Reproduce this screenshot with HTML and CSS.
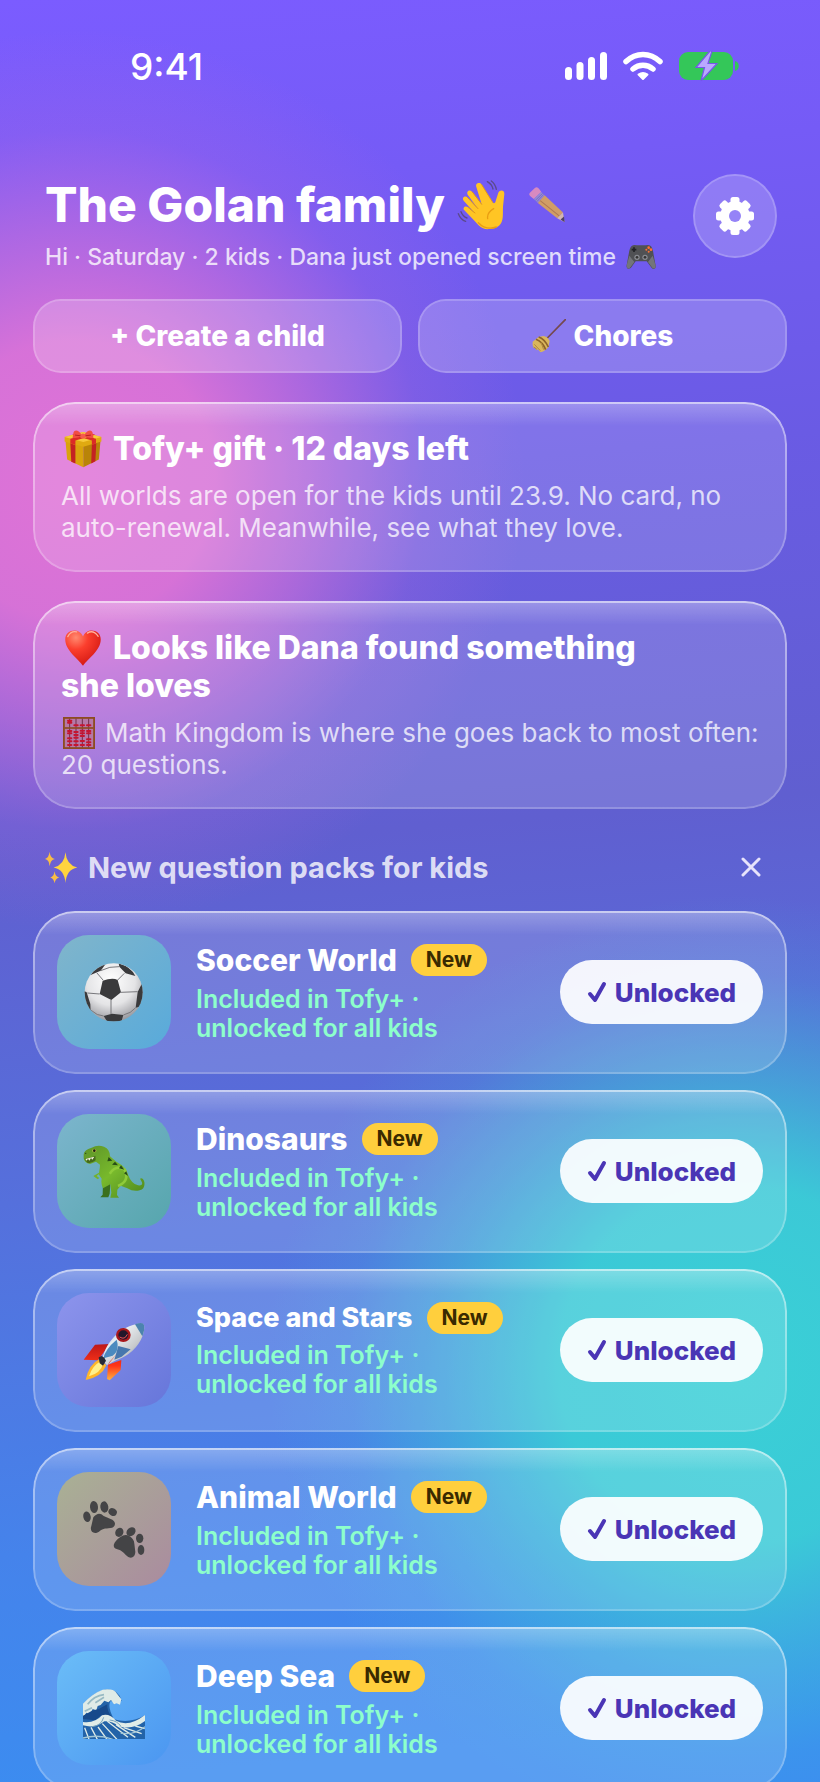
FILE: index.html
```
<!DOCTYPE html>
<html lang="en">
<head>
    <meta charset="UTF-8">
    <meta name="viewport" content="width=device-width, initial-scale=1.0">
    <title>Tofy - Family</title>
    <link rel="stylesheet" href="styles.css">
</head>
<body>
<div class="app">
    <div class="status-bar">
        <span class="clock">9:41</span>
        <div class="status-icons">
            <svg width="42" height="28" viewBox="0 0 42 28" fill="#fff">
                <rect x="0" y="15" width="7" height="13" rx="3.5"/>
                <rect x="11.500" y="10" width="7" height="18" rx="3.500"/>
                <rect x="23" y="5" width="7" height="23" rx="3.500"/>
                <rect x="35" y="0" width="7" height="28" rx="3.500"/>
            </svg>
            <svg width="40" height="30" viewBox="0 0 40 30" fill="none" stroke="#fff" stroke-width="5.500" stroke-linecap="round">
                <path d="M3 10.500C13 1 27 1 37 10.500"/>
                <path d="M10 18C16 13 24 13 30 18"/>
                <path d="M20 28l-4.500-4.500q4.500-3 9 0z" fill="#fff" stroke-width="2" stroke-linejoin="round"/>
            </svg>
            <svg width="60" height="30" viewBox="0 0 60 30">
                <rect x="0" y="1" width="54" height="28" rx="9" fill="#34c759"/>
                <path d="M56 10c5 1 5 9 0 10z" fill="#34c759"/>
                <path d="M31 0L17 16.500h8.500L22 30 38 12.500h-9L33 0z" fill="#b9a8ff" stroke="#7558e8" stroke-width="1.200"/>
            </svg>
        </div>
    </div>

    <header class="header">
        <div class="header-text">
            <h1>The Golan family
                <svg class="emoji-hand" viewBox="0 0 150 150">
                    <path d="M91 5q14 8 17 22M103 3q12 9 15 25M4 101q7 18 22 23M12 95q6 15 18 19" fill="none" stroke="#5b4a8c" stroke-width="4" stroke-linecap="round"/>
                    <path d="M97 147C78 150 65 137 53 123L22 91c-7-9 4-16 11-9l20 17L20 62c-7-9 5-17 12-9l31 33L32 44c-5-10 6-17 13-9l29 38L58 21C54 10 68 5 74 14l33 53c4 5 8 2 9-4l7-22c3-13 20-12 19 1l-4 38c-1 22 3 44-12 57-9 7-18 9-29 10z" fill="#ffc524"/>
                    <path d="M54 99L33 82M63 86L32 53M74 73L46 36M107 67L74 14" stroke="#e59a13" stroke-width="3" fill="none" stroke-linecap="round"/>
                    <path d="M92 116q-3-18 18-30M64 128q23 24 54 13" fill="none" stroke="#e99e12" stroke-width="4" stroke-linecap="round"/>
                </svg>
                <svg class="emoji-pencil" viewBox="0 0 106 106">
                    <path d="M2 18L18 2q7-3 12 4l6 9-22 20-9-7q-6-5-3-10z" fill="#e993b8"/>
                    <path d="M14 35L36 15l10 9-20 23z" fill="#9b92cf"/>
                    <path d="M19 39l21-20M23 43l20-21" stroke="#6d65b4" stroke-width="2"/>
                    <path d="M26 47L46 24l54 51-17 17z" fill="#e2a94e"/>
                    <path d="M33 40l56 45" stroke="#ba7e37" stroke-width="3"/>
                    <path d="M83 92l17-17 5 29z" fill="#e5c7a6"/>
                    <path d="M93 96l10-9 2 17z" fill="#493c4c"/>
                </svg>
            </h1>
            <p>Hi · Saturday · 2 kids · Dana just opened screen time
                <svg class="emoji-pad" viewBox="0 0 90 78">
                    <path d="M18 5Q24 1 32 4h27q8-3 14 1 7 4 10 28l6 32c1 11-9 13-14 4L62 52H29L16 70c-6 8-16 4-14-6L8 31Q11 8 18 5z" fill="#505154"/>
                    <path d="M10 35L2 64q0 12 9 9l14-19zM80 35l9 30q0 11-9 8L66 54z" fill="#73757a"/>
                    <path d="M24 10v14M17 17h14" stroke="#202124" stroke-width="5"/>
                    <circle cx="33" cy="40" r="8" fill="#898b91"/><circle cx="33" cy="40" r="4" fill="#333"/>
                    <circle cx="57" cy="40" r="8" fill="#898b91"/><circle cx="57" cy="40" r="4" fill="#333"/>
                    <g fill="#ff7031"><circle cx="68" cy="11" r="4"/><circle cx="61" cy="17" r="3"/><circle cx="75" cy="17" r="4"/><circle cx="68" cy="23" r="3"/></g>
                </svg>
            </p>
        </div>
        <button class="settings" type="button" aria-label="Settings">
            <svg width="38" height="38" viewBox="-19 -19 38 38">
                <g fill="#fff">
                    <circle r="14.800"/>
                    <rect x="-4.500" y="-19" width="9" height="38" rx="2.500"/>
                    <rect x="-4.500" y="-19" width="9" height="38" rx="2.500" transform="rotate(45)"/>
                    <rect x="-4.500" y="-19" width="9" height="38" rx="2.500" transform="rotate(90)"/>
                    <rect x="-4.500" y="-19" width="9" height="38" rx="2.500" transform="rotate(135)"/>
                </g>
                <circle r="6" fill="#9583f7"/>
            </svg>
        </button>
    </header>

    <div class="actions">
        <button class="action" type="button">+ Create a child</button>
        <button class="action" type="button">
            <svg width="34" height="34" viewBox="0 0 102 102">
                <path d="M100 2L43 60" stroke="#75494d" stroke-width="5" stroke-linecap="round"/>
                <path d="M34 51q13 1 19 15l-4 18q-8 12-23 16-7-6-8-9l-5 3-2-8-6 1Q0 80 2 68L20 54z" fill="#d9b65c"/>
                <path d="M20 54q17 5 29 30M12 61q20 8 29 31" stroke="#8d6329" stroke-width="5" fill="none"/>
                <path d="M7 76l18 19M5 84l10 7M27 70l8 22" stroke="#b18b3d" stroke-width="3"/>
            </svg>
            Chores
        </button>
    </div>

    <section class="card info">
        <h2>
            <svg class="emoji" viewBox="0 0 120 120">
                <path d="M4 25L61 42v76L10 93z" fill="#d9a30c"/>
                <path d="M116 25L61 42v76l49-25z" fill="#b98408"/>
                <path d="M2 22L60 6l58 16v14L61 53 2 36z" fill="#e0aa11"/>
                <path d="M2 22L60 6l58 16-57 16z" fill="#f7ca3b"/>
                <path d="M20 42l16 6v58l-13-6zM88 47l14-5-3 57-13 7z" fill="#c42222"/>
                <path d="M20 28l62-18 17 5-63 18v14l-16-5zM101 28L39 10l-13 5 62 18v14l13-5z" fill="#dc2b27"/>
                <path d="M58 19C47 0 34-3 30 8l-3 17q15 2 31-6zM62 19C73 0 86-3 90 8l3 17q-15 2-31-6z" fill="#f14d43"/>
                <path d="M57 19l-22-3M63 19l22-3" stroke="#b42020" stroke-width="3"/>
                <circle cx="60" cy="19" r="8" fill="#f65a4e"/>
            </svg>Tofy+ gift · 12 days left</h2>
        <p>All worlds are open for the kids until 23.9. No card, no auto-renewal. Meanwhile, see what they love.</p>
    </section>

    <section class="card info">
        <h2>
            <svg class="emoji" viewBox="0 0 120 120">
                <defs>
                    <radialGradient id="heart" cx=".3" cy=".2" r=".85">
                        <stop offset="0" stop-color="#ff8a70"/>
                        <stop offset=".4" stop-color="#fb3e2d"/>
                        <stop offset="1" stop-color="#d31712"/>
                    </radialGradient>
                </defs>
                <path d="M60 116C45 94 4 68 4 33 4 1 48-6 60 24 72-6 116 1 116 33c0 35-41 61-56 83z" fill="url(#heart)"/>
                <path d="M12 24Q22 5 40 9M74 13q18-12 34 10" fill="none" stroke="#ffb09b" stroke-width="4" stroke-linecap="round"/>
            </svg>Looks like Dana found something<br>she loves</h2>
        <p>
            <svg class="emoji-abacus" viewBox="0 0 96 96">
                <rect x="2" y="2" width="92" height="92" fill="#b678a7" stroke="#8d4c20" stroke-width="7"/>
                <path d="M20 5v86M39 5v86M58 5v86M77 5v86" stroke="#71304b" stroke-width="3"/>
                <path d="M4 33h88" stroke="#8d4c20" stroke-width="5"/>
                <g stroke="#c51530" stroke-width="6" stroke-linecap="round">
                    <path d="M15 11h10M15 17h10M34 25h10M53 25h10M72 25h10"/>
                    <path d="M15 42h10M15 49h10M15 64h10M15 73h10M15 84h10"/>
                    <path d="M34 45h10M34 54h10M34 62h10M34 73h10M34 84h10"/>
                    <path d="M53 41h10M53 49h10M53 57h10M53 72h10M53 84h10"/>
                    <path d="M72 42h10M72 49h10M72 67h10M72 76h10M72 84h10"/>
                </g>
            </svg>Math Kingdom is where she goes back to most often: 20 questions.</p>
    </section>

    <div class="section-head">
        <h3>
            <svg class="emoji-sparkles" viewBox="0 0 100 100">
                <path d="M62 4q3 39 36 46-33 6-36 47-3-41-36-47 33-7 36-46z" fill="#ffd43e"/>
                <path d="M14 2q2 19 16 22-14 3-16 22Q13 27 0 24 12 20 14 2zM29 61q2 16 14 19-12 3-14 18-2-15-13-18 11-3 13-19z" fill="#f9bd45"/>
            </svg>New question packs for kids</h3>
        <button class="close" type="button" aria-label="Close">
            <svg width="20" height="20" viewBox="0 0 20 20" stroke="#e7e3fb" stroke-width="3" stroke-linecap="round">
                <path d="M2 2l16 16M18 2L2 18"/>
            </svg>
        </button>
    </div>

    <div class="packs">
        <article class="card pack">
            <div class="tile soccer">
                <svg viewBox="0 0 186 186">
                    <defs>
                        <radialGradient id="ball" cx=".45" cy=".3" r=".7">
                            <stop offset="0" stop-color="#fff"/>
                            <stop offset=".6" stop-color="#e4e4e6"/>
                            <stop offset="1" stop-color="#9b9ba0"/>
                        </radialGradient>
                        <clipPath id="ball-clip"><circle cx="92" cy="94" r="87"/></clipPath>
                    </defs>
                    <circle cx="92" cy="94" r="87" fill="url(#ball)"/>
                    <g clip-path="url(#ball-clip)">
                        <path d="M59 59q30-10 45-2l10 37-29 23-35-18zM107 7q38 12 50 38l-29-8-19-20zM21 43Q37 18 68 9L53 29zM0 89l11 5 11 35 1 25-16-20zM176 69l10 24-11 43-17 4 6-47zM62 165l25-7 34 4-6 20H73z" fill="#3a3a3c"/>
                        <path d="M60 57L41 35M104 57l20-20M113 94l51-2M84 117v42M50 99l-37-3M53 29Q80 15 109 17M23 147q20 18 39 18M121 162q23-5 37-22" fill="none" stroke="#77777b" stroke-width="3"/>
                    </g>
                </svg>
            </div>
            <div class="pack-text">
                <h4>Soccer World <span class="badge">New</span></h4>
                <p>Included in Tofy+ ·<br>unlocked for all kids</p>
            </div>
            <button class="unlocked" type="button">
                <svg viewBox="0 0 20 24"><path d="M3 14l5 6L17 4"/></svg>Unlocked
            </button>
        </article>

        <article class="card pack">
            <div class="tile dino">
                <svg viewBox="0 0 186 186">
                    <defs>
                        <linearGradient id="rex" x1="0" y1="0" x2="1" y2="1">
                            <stop offset="0" stop-color="#5d9428"/>
                            <stop offset=".5" stop-color="#78b92c"/>
                            <stop offset="1" stop-color="#4d871c"/>
                        </linearGradient>
                    </defs>
                    <path d="M60 125l-1 39-7 8h24l4-11 2-28z" fill="#3b701c"/>
                    <path d="M2 43Q3 29 26 23 43 14 63 20q18 7 18 29l19 16q30 16 34 37 12 31 31 34 17 2 11-11-3-6-5-9 9-4 13 10 3 20-14 25-19 5-37-6l-20-8-10 12-1 16 6 8H82l3-15-3-25-22 12q-7-14-4-29l-9-13-6 5 8 6-5 4-13-10 17-10Q51 82 51 74l-12-9-18 7Q4 69 2 55z" fill="url(#rex)"/>
                    <path d="M4 56q17 0 33-9l1 14q-15 11-25 7z" fill="#456a1b"/>
                    <path d="M7 57l4 5 4-6 4 6 5-8 4 5 6-9" fill="#f4f3dc"/>
                    <path d="M80 101q20-29 45-12 16 35-20 49" fill="none" stroke="#8fcb39" stroke-width="8"/>
                    <path d="M77 51l11 11-15 2zM96 65l9 11-18-2zM114 76l10 13-16-4zM130 94l5 14-12-8z" fill="#284d17"/>
                    <ellipse cx="34" cy="32" rx="6" ry="5" fill="#dbc451"/><circle cx="34" cy="32" r="4" fill="#172111"/>
                    <circle cx="8" cy="40" r="2" fill="#26401a"/>
                </svg>
            </div>
            <div class="pack-text">
                <h4>Dinosaurs <span class="badge">New</span></h4>
                <p>Included in Tofy+ ·<br>unlocked for all kids</p>
            </div>
            <button class="unlocked" type="button">
                <svg viewBox="0 0 20 24"><path d="M3 14l5 6L17 4"/></svg>Unlocked
            </button>
        </article>

        <article class="card pack">
            <div class="tile space">
                <svg viewBox="0 0 186 186">
                    <defs>
                        <linearGradient id="hull" x1="0" y1="0" x2="1" y2="1">
                            <stop offset="0" stop-color="#4784b8"/>
                            <stop offset=".35" stop-color="#e8edf0"/>
                            <stop offset=".65" stop-color="#c8cacc"/>
                            <stop offset="1" stop-color="#477ba5"/>
                        </linearGradient>
                        <linearGradient id="fin" x1="0" y1="0" x2="0" y2="1">
                            <stop offset="0" stop-color="#bd1717"/>
                            <stop offset=".6" stop-color="#ff3518"/>
                            <stop offset="1" stop-color="#ffb23e"/>
                        </linearGradient>
                    </defs>
                    <path d="M80 75l-44 2L2 122l43 2zM75 137l40-14-2 30-33 31-8-4z" fill="url(#fin)"/>
                    <path d="M49 121Q18 135 8 183q47-8 62-44z" fill="#ffb629"/>
                    <path d="M53 127q-26 14-35 45 34-9 42-36z" fill="#fff08b"/>
                    <path d="M57 124C66 80 99 29 161 15q17-5 22 3 3 11-4 32-20 52-80 74l-27 14z" fill="url(#hull)"/>
                    <path d="M156 16q24-9 27 2 3 12-5 34z" fill="#4b83ae"/>
                    <path d="M101 62Q66 91 61 118l23-6q28-13 17-50z" fill="#4b8abf"/>
                    <path d="M106 81l37 10-27 22-22 9z" fill="#4777ad"/>
                    <path d="M47 115l9-4 8 5 5 9-9 15-10-7z" fill="#292b36"/>
                    <path d="M74 138l27-33-21 23z" fill="#dd2418"/>
                    <ellipse cx="121" cy="48" rx="22" ry="21" fill="#a8171b"/>
                    <ellipse cx="121" cy="48" rx="15" ry="14" fill="#21172a"/>
                    <path d="M110 54q15 10 23-8" fill="none" stroke="#f05154" stroke-width="3"/>
                </svg>
            </div>
            <div class="pack-text">
                <h4 class="small">Space and Stars <span class="badge">New</span></h4>
                <p>Included in Tofy+ ·<br>unlocked for all kids</p>
            </div>
            <button class="unlocked" type="button">
                <svg viewBox="0 0 20 24"><path d="M3 14l5 6L17 4"/></svg>Unlocked
            </button>
        </article>

        <article class="card pack">
            <div class="tile animal">
                <svg viewBox="0 0 186 186" fill="#444446">
                    <ellipse cx="12" cy="56" rx="11" ry="16" transform="rotate(-12 12 56)"/>
                    <ellipse cx="33" cy="27" rx="12" ry="18" transform="rotate(-5 33 27)"/>
                    <ellipse cx="64" cy="27" rx="12" ry="17" transform="rotate(-8 64 27)"/>
                    <ellipse cx="89" cy="42" rx="13" ry="11" transform="rotate(30 89 42)"/>
                    <path d="M31 58q16-20 31-4l26 11c14 9 8 25-6 25-16 2-22 1-34 11-16 10-29-1-23-17z"/>
                    <ellipse cx="109" cy="103" rx="12" ry="14" transform="rotate(25 109 103)"/>
                    <ellipse cx="144" cy="101" rx="15" ry="12" transform="rotate(-42 144 101)"/>
                    <ellipse cx="170" cy="121" rx="11" ry="14"/>
                    <ellipse cx="174" cy="156" rx="10" ry="15"/>
                    <path d="M111 118q16-12 29-3 13 8 14 22l3 25c-1 18-15 21-25 12-12-11-15-16-29-20-18-4-12-22 8-36z"/>
                </svg>
            </div>
            <div class="pack-text">
                <h4>Animal World <span class="badge">New</span></h4>
                <p>Included in Tofy+ ·<br>unlocked for all kids</p>
            </div>
            <button class="unlocked" type="button">
                <svg viewBox="0 0 20 24"><path d="M3 14l5 6L17 4"/></svg>Unlocked
            </button>
        </article>

        <article class="card pack">
            <div class="tile sea">
                <svg viewBox="0 0 186 186">
                    <path d="M0 83Q30 45 66 38q39-5 50 33L98 79 83 71Q72 88 93 127q48 14 93-12v72H0z" fill="#2363a8"/>
                    <path d="M0 80Q28 49 59 38q34-5 43 12l13 17-4 16-10-4-8 3-9-13-8 7-12-5-11 13-9 3-4 13-11-4-8 16-11-5-8 12-12 1z" fill="#dfebe7"/>
                    <path d="M14 82q20-26 49-29M5 103l22-11M37 77l26-16" fill="none" stroke="#98bac3" stroke-width="5"/>
                    <path d="M73 82q-3 18 16 42l-36-8-17 14-36-4v-10l27-15 20-5z" fill="#174a8b"/>
                    <path d="M0 135q35 5 57-20 22-7 42 16 38 21 87-17v18q-37 28-79 16-19-16-43-15-26 22-64 12z" fill="#e0ece8"/>
                    <path d="M5 152l13 35M24 151l19 36M45 150l27 37M58 140l44 47M73 133l62 48M99 143l58 38M122 152l54 18M157 147l28 8" fill="none" stroke="#e0ece8" stroke-width="4"/>
                    <path d="M0 183q47-12 89 4M113 168q38 8 73-19" fill="none" stroke="#a3c7d6" stroke-width="4"/>
                    <path d="M62 121q-7 25-35 28M80 129q22 2 34 19" fill="none" stroke="#78a5bd" stroke-width="3"/>
                </svg>
            </div>
            <div class="pack-text">
                <h4>Deep Sea <span class="badge">New</span></h4>
                <p>Included in Tofy+ ·<br>unlocked for all kids</p>
            </div>
            <button class="unlocked" type="button">
                <svg viewBox="0 0 20 24"><path d="M3 14l5 6L17 4"/></svg>Unlocked
            </button>
        </article>
    </div>
</div>
</body>
</html>
```

FILE: styles.css
```
* {
    box-sizing: border-box;
    margin: 0;
    padding: 0;
}
body {
    font-family: Inter, "Liberation Sans", sans-serif;
    color: #fff;
}
button {
    font-family: inherit;
    color: inherit;
    cursor: pointer;
}
.app {
    height: 100vh;
    overflow: hidden;
    padding: 0 33px;
    /* pink and teal glows over the blue base */
    background:
        radial-gradient(circle at 75px 480px, rgba(228, 116, 214, 0.96) 0, rgba(226, 116, 214, 0.9) 140px, rgba(214, 112, 216, 0.6) 245px, rgba(190, 105, 220, 0.2) 350px, rgba(170, 100, 220, 0) 450px),
        radial-gradient(circle at 90% 1365px, rgba(58, 208, 214, 1) 0, rgba(58, 206, 214, 0.94) 180px, rgba(58, 200, 215, 0.5) 295px, rgba(58, 190, 220, 0.15) 390px, rgba(58, 190, 220, 0) 470px),
        linear-gradient(175deg, #7b5cff 0, #755bf6 200px, #6a5be4 500px, #605fd0 860px, #5570dc 1200px, #4583eb 1550px, #3c8cf0 1782px);
}

/* Status bar */
.status-bar {
    display: flex;
    justify-content: space-between;
    align-items: center;
    height: 132px;
    padding: 0 48px 0 97px;
}
.clock {
    font-size: 37px;
    font-weight: 500;
}
.status-icons {
    display: flex;
    align-items: center;
    gap: 16px;
}

/* Header */
.header {
    display: flex;
    justify-content: space-between;
    margin-top: 42px;
    padding: 0 10px 0 12px;
}
h1 {
    display: flex;
    align-items: center;
    font-size: 48px;
    font-weight: 800;
    line-height: 62px;
}
.emoji-hand {
    width: 50px;
    height: 50px;
    margin-left: 12px;
}
.emoji-pencil {
    width: 36px;
    height: 36px;
    margin-left: 22px;
    opacity: 0.85;
}
.header-text p {
    display: flex;
    align-items: center;
    gap: 10px;
    margin-top: 5px;
    font-size: 23px;
    font-weight: 500;
    line-height: 32px;
    color: rgba(255, 255, 255, 0.78);
}
.emoji-pad {
    width: 30px;
    height: 26px;
}
.settings {
    display: flex;
    align-items: center;
    justify-content: center;
    width: 84px;
    height: 84px;
    border: 2px solid rgba(255, 255, 255, 0.35);
    border-radius: 50%;
    background: rgba(255, 255, 255, 0.2);
    background-clip: padding-box;
}

/* Action buttons */
.actions {
    display: grid;
    grid-template-columns: 1fr 1fr;
    gap: 16px;
    margin-top: 26px;
}
.action {
    display: flex;
    align-items: center;
    justify-content: center;
    gap: 8px;
    height: 74px;
    border: 2px solid rgba(255, 255, 255, 0.35);
    border-radius: 28px;
    background: rgba(255, 255, 255, 0.2);
    background-clip: padding-box;
    font-size: 28px;
    font-weight: 800;
}

/* Glass cards */
.card {
    position: relative;
    border-radius: 42px;
    background: linear-gradient(rgba(255, 255, 255, 0.24), rgba(255, 255, 255, 0) 24px), rgba(255, 255, 255, 0.15);
}
.card::before {
    content: "";
    position: absolute;
    inset: 0;
    padding: 2px;
    border-radius: inherit;
    background: linear-gradient(rgba(255, 255, 255, 0.5), rgba(255, 255, 255, 0.2));
    mask: linear-gradient(#000 0 0) content-box exclude, linear-gradient(#000 0 0);
    pointer-events: none;
}
.info {
    margin-top: 29px;
    padding: 28px;
}
.info h2 {
    font-size: 32px;
    font-weight: 800;
    line-height: 38px;
}
.info p {
    margin-top: 12px;
    font-size: 26px;
    line-height: 32px;
    color: rgba(255, 255, 255, 0.75);
}
.info svg {
    margin: 0 10px 0 2px;
    vertical-align: top;
}
.emoji {
    width: 40px;
    height: 38px;
}
.emoji-abacus {
    width: 32px;
    height: 32px;
}

/* Section heading */
.section-head {
    display: flex;
    justify-content: space-between;
    align-items: center;
    margin: 40px 0 26px;
    padding: 0 12px;
    height: 36px;
}
.section-head h3 {
    display: flex;
    align-items: center;
    gap: 10px;
    font-size: 29px;
    font-weight: 700;
    color: rgba(255, 255, 255, 0.8);
}
.emoji-sparkles {
    width: 33px;
    height: 33px;
}
.close {
    display: flex;
    padding: 14px;
    border: none;
    background: none;
}

/* Question packs */
.packs {
    display: flex;
    flex-direction: column;
    gap: 16px;
}
.pack {
    display: flex;
    align-items: center;
    padding: 24px 24px 25px;
}
.tile {
    display: flex;
    align-items: center;
    justify-content: center;
    width: 114px;
    height: 114px;
    border-radius: 32px;
}
.tile svg {
    width: 62px;
    height: 62px;
}
.soccer {
    background: linear-gradient(135deg, #80b5cb, #58aadb);
}
.dino {
    background: linear-gradient(135deg, #7cb5cd, #56a6ad);
}
.space {
    background: linear-gradient(135deg, #8d94ec, #6676da);
}
.animal {
    background: linear-gradient(135deg, #a9b194, #aa8b9f);
}
.sea {
    background: linear-gradient(135deg, #6bbdf7, #4b96f1);
}
.pack-text {
    flex: 1;
    margin-left: 25px;
}
.pack h4 {
    display: flex;
    align-items: center;
    gap: 14px;
    font-size: 30px;
    font-weight: 800;
    line-height: 36px;
}
.pack h4.small {
    font-size: 27px;
    line-height: 32px;
}
.badge {
    padding: 0 15px;
    border-radius: 16px;
    background: #ffcf3d;
    color: #3a2a00;
    font-size: 21px;
    font-weight: 700;
    line-height: 32px;
}
.pack p {
    margin-top: 7px;
    font-size: 25px;
    font-weight: 600;
    line-height: 29px;
    color: #8dffcb;
}
.unlocked {
    display: flex;
    align-items: center;
    justify-content: center;
    gap: 8px;
    width: 203px;
    height: 64px;
    border: none;
    border-radius: 32px;
    background: rgba(255, 255, 255, 0.92);
    color: #4a35b5;
    font-size: 26px;
    font-weight: 800;
}
.unlocked svg {
    width: 20px;
    height: 24px;
    fill: none;
    stroke: #4a35b5;
    stroke-width: 4;
    stroke-linecap: round;
    stroke-linejoin: round;
}
```
